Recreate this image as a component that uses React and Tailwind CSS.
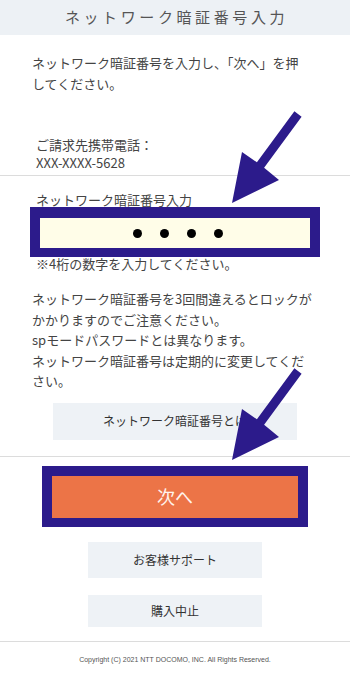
// App.jsx
export default function App() {
  const font = { fontFamily: '"Noto Sans CJK JP", "Noto Sans", sans-serif' };

  return (
    <div className="relative w-[350px] min-h-[675px] bg-white text-[#444]" style={font}>
      {/* Header */}
      <div className="h-[35px] bg-[#edf1f5] flex items-center justify-center">
        <h1 className="text-[15px] tracking-[3.6px] text-[#555] pl-[3px]">ネットワーク暗証番号入力</h1>
      </div>

      {/* Intro */}
      <p className="mt-[17px] px-[32px] text-[13px] leading-[21px]">
        ネットワーク暗証番号を入力し、「次へ」を押
        <br />
        してください。
      </p>

      {/* Phone */}
      <div className="mt-[42px] pl-[36px] text-[13px] leading-[18px]">
        <p>ご請求先携帯電話：</p>
        <p>XXX-XXXX-5628</p>
      </div>

      <div className="mt-[3px] h-px bg-[#dcdcdc]"></div>

      {/* PIN input */}
      <p className="mt-[17px] pl-[36px] text-[13px] leading-[14px]">ネットワーク暗証番号入力</p>
      <div className="mx-[30px] border-x-[10px] border-t-[11px] border-b-[9px] border-[#2c1b8b]">
        <div className="h-[30px] bg-[#fffde8] flex items-center justify-center gap-[18px] pl-[6px]">
          <span className="w-[9px] h-[9px] rounded-full bg-black"></span>
          <span className="w-[9px] h-[9px] rounded-full bg-black"></span>
          <span className="w-[9px] h-[9px] rounded-full bg-black"></span>
          <span className="w-[9px] h-[9px] rounded-full bg-black"></span>
        </div>
      </div>
      <p className="pl-[36px] text-[13px] leading-[14px]">※4桁の数字を入力してください。</p>

      {/* Notes */}
      <p className="mt-[18px] px-[32px] text-[13px] leading-[20.5px]">
        ネットワーク暗証番号を3回間違えるとロックが
        <br />
        かかりますのでご注意ください。
        <br />
        spモードパスワードとは異なります。
        <br />
        ネットワーク暗証番号は定期的に変更してくだ
        <br />
        さい。
      </p>

      <div className="mt-[11px] flex justify-center">
        <button className="w-[244px] h-[37px] bg-[#eef2f6] text-[12px] text-[#333]">
          ネットワーク暗証番号とは
        </button>
      </div>

      <div className="mt-[16px] h-px bg-[#dcdcdc]"></div>

      {/* Next button */}
      <div className="mt-[9px] flex justify-center">
        <div className="w-[266px] border-x-[10px] border-t-[10px] border-b-[9px] border-[#2c1b8b]">
          <button className="w-full h-[42px] bg-[#ec7447] text-[18px] text-[#fff3ec]">次へ</button>
        </div>
      </div>

      <div className="mt-[15px] flex flex-col items-center">
        <button className="w-[174px] h-[36px] bg-[#eef2f6] text-[12px] text-[#333]">お客様サポート</button>
        <button className="mt-[17px] w-[174px] h-[32px] bg-[#eef2f6] text-[12px] text-[#333]">購入中止</button>
      </div>

      <div className="mt-[14px] h-px bg-[#dcdcdc]"></div>

      <p
        className="mt-[13px] text-center text-[7px] leading-[10px] text-[#555]"
        style={{ fontFamily: '"Liberation Sans", Arial, sans-serif' }}
      >
        Copyright (C) 2021 NTT DOCOMO, INC. All Rights Reserved.
      </p>

      {/* Annotation arrows */}
      <svg className="absolute inset-0 pointer-events-none" width="350" height="675" viewBox="0 0 350 675">
        <polygon
          fill="#2c1b8b"
          points="294.4,111.3 301.6,116.7 264.1,167.7 279,180 232,203 242,152 256.9,162.3"
        />
        <polygon
          fill="#2c1b8b"
          points="294.4,368.3 301.6,373.7 264.1,424.7 279,437 232,460 242,409 256.9,419.3"
        />
      </svg>
    </div>
  );
}
